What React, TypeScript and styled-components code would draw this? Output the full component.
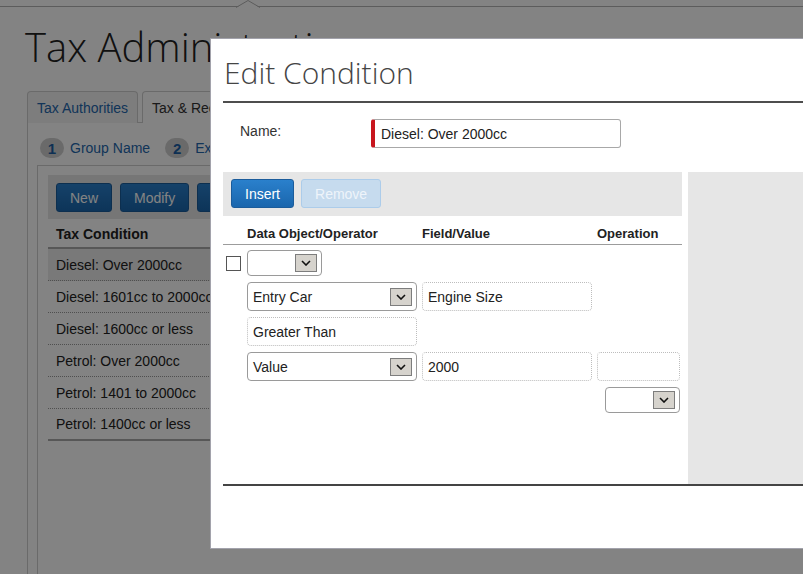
import React from 'react';
import styled, { createGlobalStyle } from 'styled-components';

const GlobalStyle = createGlobalStyle`
  html, body {
    margin: 0;
    padding: 0;
    height: 100%;
    overflow: hidden;
    background: #fff;
  }
  body {
    font-family: "Liberation Sans", Arial, sans-serif;
    font-size: 14px;
    color: #222;
  }
  * { box-sizing: border-box; }
`

/* ---------- page behind the dialog ---------- */

const Page = styled.div`
  min-height: 574px;
`

const TopBar = styled.div`
  position: relative;
  height: 7px;
  border-bottom: 1px solid #b3b3b3;
`

const Caret = styled.svg`
  position: absolute;
  left: 236px;
  top: 0;
`

const Heading = styled.h1`
  margin: 16px 0 0 25px;
  font-family: "Open Sans", sans-serif;
  font-weight: 300;
  font-size: 40px;
  line-height: 48px;
  color: #222;
  white-space: nowrap;
`

const Tabs = styled.div`
  display: flex;
  gap: 4px;
  margin: 20px 0 0 27px;
`

const Tab = styled.div<{ active?: boolean }>`
  position: relative;
  z-index: 1;
  height: 32px;
  margin-bottom: -1px;
  padding: 0 9px;
  display: flex;
  align-items: center;
  border: 1px solid #cfcfcf;
  border-bottom: none;
  border-radius: 4px 4px 0 0;
  background: ${({ active }) => active ? '#fff' : '#f3f3f3'};
  color: ${({ active }) => active ? '#333' : '#2467ad'};
  white-space: nowrap;
`

const Panel = styled.div`
  margin-left: 27px;
  border-left: 1px solid #cfcfcf;
  border-top: 1px solid #cfcfcf;
  padding: 13px 0 0 9px;
`

const Steps = styled.div`
  display: flex;
  align-items: center;
  gap: 15px;
  height: 24px;
  padding-left: 3px;
  margin-bottom: 5px;
`

const Step = styled.div`
  display: flex;
  align-items: center;
  gap: 6px;
  color: #2467ad;
  white-space: nowrap;
`

const StepNumber = styled.span`
  width: 24px;
  height: 20px;
  border-radius: 10px;
  background: #cfcfcf;
  display: flex;
  align-items: center;
  justify-content: center;
  font-weight: bold;
  font-size: 15px;
  color: #1d5fa3;
`

const ListBox = styled.div`
  border: 1px solid #cfcfcf;
  border-right: none;
  padding: 9px 0 0 10px;
  height: 420px;
`

const ListToolbar = styled.div`
  display: flex;
  gap: 8px;
  height: 44px;
  padding: 8px;
  background: #e6e6e6;
`

const Button = styled.button<{ disabled?: boolean }>`
  height: 29px;
  padding: 0 13px;
  border-radius: 3px;
  font-family: "Liberation Sans", Arial, sans-serif;
  font-size: 14px;
  cursor: pointer;
  border: 1px solid ${({ disabled }) => disabled ? '#acccea' : '#1b5c9b'};
  background: ${({ disabled }) => disabled
    ? '#c6dbee'
    : 'linear-gradient(#2a80cc, #1a66ad)'};
  color: ${({ disabled }) => disabled ? '#eef4fa' : '#fff'};
`

const ListHeader = styled.div`
  height: 30px;
  padding: 2px 8px 0;
  display: flex;
  align-items: center;
  font-weight: bold;
  border-bottom: 2px solid #a9a9a9;
  white-space: nowrap;
`

const ListRow = styled.div<{ selected?: boolean; last?: boolean }>`
  height: 32px;
  padding: 0 8px;
  display: flex;
  align-items: center;
  white-space: nowrap;
  background: ${({ selected }) => selected ? '#ebebeb' : 'transparent'};
  border-bottom: ${({ last }) => last ? '2px solid #a9a9a9' : '1px dotted #9a9a9a'};
`

const Overlay = styled.div`
  position: fixed;
  inset: 0;
  z-index: 10;
  background: rgba(0, 0, 0, 0.485);
`

/* ---------- dialog ---------- */

const Dialog = styled.div`
  position: fixed;
  z-index: 11;
  left: 210px;
  top: 38px;
  width: 720px;
  height: 511px;
  background: #fff;
  border: 1px solid #a2a2ab;
  padding-left: 12px;
`

const DialogTitle = styled.h2`
  margin: 14px 0 0;
  padding: 0 0 8px 1px;
  border-bottom: 2px solid #4d4d4d;
  font-family: "Open Sans", sans-serif;
  font-weight: 300;
  font-size: 30px;
  line-height: 40px;
  color: #444;
`

const NameRow = styled.div`
  display: flex;
  align-items: center;
  margin-top: 16px;
`

const NameLabel = styled.label`
  width: 148px;
  padding-left: 17px;
  color: #333;
  align-self: flex-start;
  margin-top: 4px;
`

const NameInput = styled.div`
  width: 250px;
  height: 29px;
  border: 1px solid #a8a8a8;
  border-left: 4px solid #c8161e;
  border-radius: 3px;
  padding-left: 6px;
  display: flex;
  align-items: center;
`

const Body = styled.div`
  display: flex;
  gap: 6px;
  margin-top: 24px;
  height: 314px;
  border-bottom: 2px solid #444;
`

const Editor = styled.div`
  width: 459px;
  flex-shrink: 0;
`

const EditorToolbar = styled.div`
  display: flex;
  gap: 7px;
  height: 44px;
  padding: 7px 8px;
  background: #e6e6e6;
`

const SidePanel = styled.div`
  flex: 1;
  background: #e6e6e6;
`

const Grid = styled.div`
  display: grid;
  grid-template-columns: 19px 170px 170px 83px;
  column-gap: 5px;
`

const HeaderGrid = styled(Grid)`
  height: 29px;
  align-items: end;
  padding-bottom: 3px;
  border-bottom: 1px solid #9c9c9c;
  font-size: 13px;
  font-weight: bold;
  white-space: nowrap;
`

const RowsGrid = styled(Grid)`
  padding-top: 5px;
  row-gap: 6px;
  align-items: center;
`

const Checkbox = styled.span`
  width: 15px;
  height: 15px;
  margin-left: 3px;
  border: 1px solid #555;
  background: #fff;
`

const Select = styled.div<{ width?: number; short?: boolean }>`
  width: ${({ width }) => width ? `${width}px` : '100%'};
  height: ${({ short }) => short ? 26 : 29}px;
  border: 1px solid #9a9a9a;
  border-radius: 4px;
  background: #fff;
  display: flex;
  align-items: center;
  justify-content: space-between;
  padding: 0 4px 0 5px;
`

const Arrow = styled.span`
  width: 22px;
  height: 18px;
  background: #d6d3cd;
  border: 1px solid #7d7d7d;
  display: flex;
  align-items: center;
  justify-content: center;
`

const Field = styled.div`
  height: 29px;
  border: 1px dotted #bdbdbd;
  border-radius: 4px;
  padding-left: 5px;
  display: flex;
  align-items: center;
`

const Chevron = () => (
  <svg width="10" height="6" viewBox="0 0 10 6">
    <polyline points="1,1 5,5 9,1" fill="none" stroke="#111" strokeWidth="1.6" />
  </svg>
)

type DropdownProps = { value?: string; width?: number; short?: boolean; style?: React.CSSProperties }
const Dropdown = ({ value = '', width, short, style }: DropdownProps) => (
  <Select width={width} short={short} style={style}>
    <span>{value}</span>
    <Arrow><Chevron /></Arrow>
  </Select>
)

const conditions = [
  'Diesel: Over 2000cc',
  'Diesel: 1601cc to 2000cc',
  'Diesel: 1600cc or less',
  'Petrol: Over 2000cc',
  'Petrol: 1401 to 2000cc',
  'Petrol: 1400cc or less',
]

const App = () => {
  return (
    <>
      <GlobalStyle />
      <Page>
        <TopBar>
          <Caret width="24" height="8" viewBox="0 0 24 8">
            <polygon points="0,8 12,0.5 24,8" fill="#fff" />
            <polyline points="0,7.5 12,0.5 24,7.5" fill="none" stroke="#b3b3b3" strokeWidth="1" />
          </Caret>
        </TopBar>
        <Heading>Tax Administration</Heading>
        <Tabs>
          <Tab>Tax Authorities</Tab>
          <Tab active>Tax &amp; Recovery Rules</Tab>
        </Tabs>
        <Panel>
          <Steps>
            <Step><StepNumber>1</StepNumber>Group Name</Step>
            <Step><StepNumber>2</StepNumber>Expressions</Step>
          </Steps>
          <ListBox>
            <ListToolbar>
              <Button>New</Button>
              <Button>Modify</Button>
              <Button>Delete</Button>
            </ListToolbar>
            <ListHeader>Tax Condition</ListHeader>
            {conditions.map((c, i) => (
              <ListRow key={c} selected={i === 0} last={i === conditions.length - 1}>{c}</ListRow>
            ))}
          </ListBox>
        </Panel>
      </Page>

      <Overlay />

      <Dialog>
        <DialogTitle>Edit Condition</DialogTitle>
        <NameRow>
          <NameLabel>Name:</NameLabel>
          <NameInput>Diesel: Over 2000cc</NameInput>
        </NameRow>
        <Body>
          <Editor>
            <EditorToolbar>
              <Button>Insert</Button>
              <Button disabled>Remove</Button>
            </EditorToolbar>
            <HeaderGrid>
              <span />
              <span>Data Object/Operator</span>
              <span>Field/Value</span>
              <span>Operation</span>
            </HeaderGrid>
            <RowsGrid>
              <Checkbox />
              <Dropdown width={75} short />
              <span />
              <span />

              <span />
              <Dropdown value="Entry Car" />
              <Field>Engine Size</Field>
              <span />

              <span />
              <Field>Greater Than</Field>
              <span />
              <span />

              <span />
              <Dropdown value="Value" />
              <Field>2000</Field>
              <Field />

              <span />
              <span />
              <span />
              <Dropdown width={75} short style={{ justifySelf: 'end' }} />
            </RowsGrid>
          </Editor>
          <SidePanel />
        </Body>
      </Dialog>
    </>
  );
};

export default App;
